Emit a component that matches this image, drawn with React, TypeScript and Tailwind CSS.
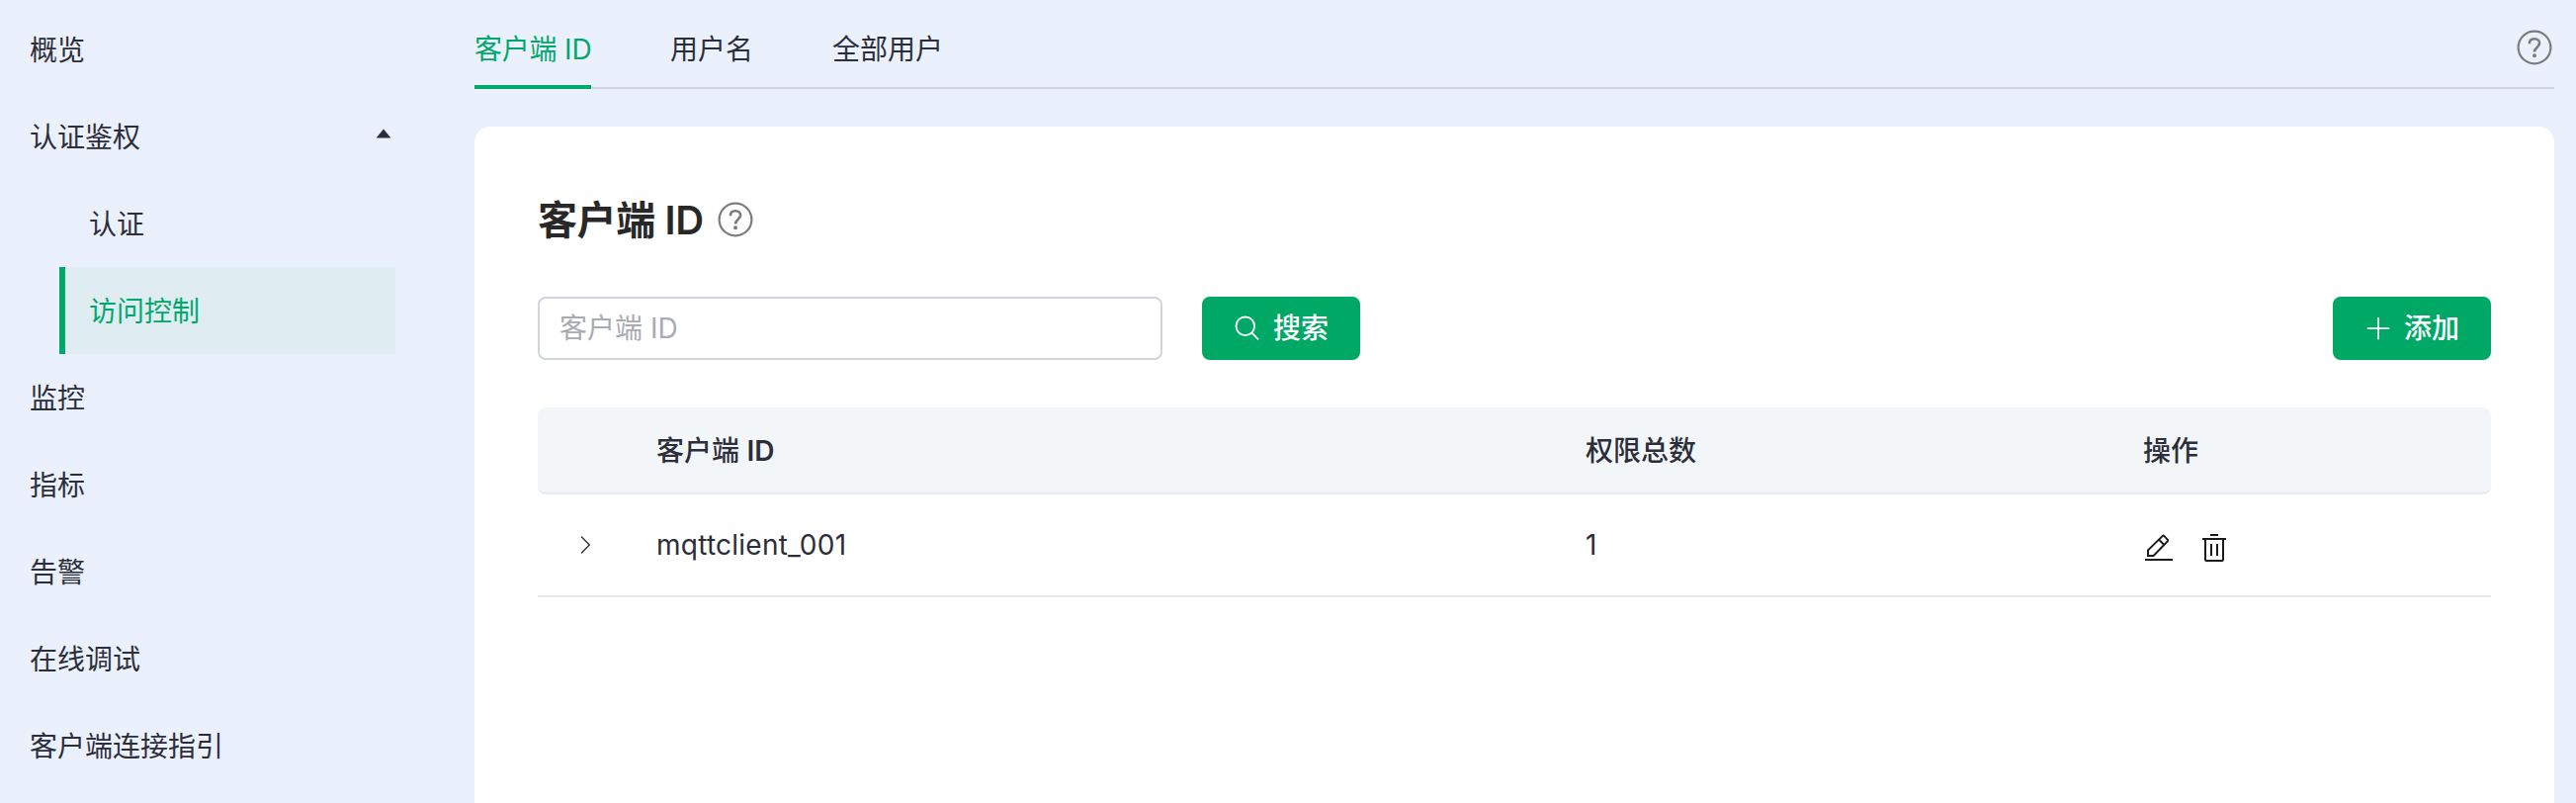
import React from "react";

const menu = [
  { label: "概览" },
  {
    label: "认证鉴权",
    children: [{ label: "认证" }, { label: "访问控制", active: true }],
  },
  { label: "监控" },
  { label: "指标" },
  { label: "告警" },
  { label: "在线调试" },
  { label: "客户端连接指引" },
];

const tabs = ["客户端 ID", "用户名", "全部用户"];

const rows = [{ clientId: "mqttclient_001", total: 1 }];

function HelpIcon({ className = "" }: { className?: string }) {
  return (
    <svg viewBox="0 0 36 36" className={`size-9 text-[#7b7c7d] ${className}`} fill="none" stroke="currentColor">
      <circle cx="18" cy="18" r="16.4" strokeWidth="2.2" />
      <path d="M12.9 14.2C12.9 11 15 9.2 18 9.2s5.1 1.8 5.1 4.6c0 3.9-5.1 4-5.1 8.7" strokeWidth="2.6" />
      <circle cx="18" cy="26.2" r="2" fill="currentColor" stroke="none" />
    </svg>
  );
}

function SearchIcon() {
  return (
    <svg viewBox="0 0 28 28" className="size-7" fill="none" stroke="currentColor" strokeWidth="1.8" strokeLinecap="round">
      <circle cx="11.8" cy="11.8" r="9.3" />
      <path d="m18.4 18.6 6.2 6.2" />
    </svg>
  );
}

function PlusIcon() {
  return (
    <svg viewBox="0 0 1024 1024" className="size-7" fill="currentColor">
      <path d="M480 480V128a32 32 0 0 1 64 0v352h352a32 32 0 1 1 0 64H544v352a32 32 0 1 1-64 0V544H128a32 32 0 0 1 0-64z" />
    </svg>
  );
}

function ChevronIcon() {
  return (
    <svg viewBox="0 0 1024 1024" className="size-6" fill="currentColor">
      <path d="M340.864 149.312a30.592 30.592 0 0 0 0 42.752L652.736 512 340.864 831.872a30.592 30.592 0 0 0 0 42.752 29.12 29.12 0 0 0 41.728 0L714.24 534.336a32 32 0 0 0 0-44.672L382.592 149.376a29.12 29.12 0 0 0-41.728 0z" />
    </svg>
  );
}

function EditIcon() {
  return (
    <svg viewBox="0 0 32 32" className="size-8" fill="none" stroke="#1a1a1a" strokeWidth="2">
      <path d="M2 28h28" />
      <path d="M5 24v-5.6L19.6 4.1a1.3 1.3 0 0 1 1.8 0l3.4 3.5a1.3 1.3 0 0 1 0 1.8L10.6 24H5z" />
      <path d="m16 7.6 5.4 5.4" />
    </svg>
  );
}

function TrashIcon() {
  return (
    <svg viewBox="0 0 32 32" className="size-8" fill="none" stroke="#1a1a1a" strokeWidth="2">
      <path d="M12 3h8M4 7h24M13 12v12M19 12v12" />
      <path d="M7 7v21a1 1 0 0 0 1 1h16a1 1 0 0 0 1-1V7" />
    </svg>
  );
}

function Sidebar() {
  return (
    <nav className="w-[480px] shrink-0 pt-1.5">
      {menu.map((item) => (
        <div key={item.label}>
          <div className="flex h-22 w-[400px] items-center justify-between pr-[4px] pl-[30px]">
            <span className="pt-px">{item.label}</span>
            {item.children && (
              <svg viewBox="0 0 16 10" className="mb-[7px] h-2.5 w-4" fill="currentColor">
                <path d="M8 .6 15.4 9.4H.6z" />
              </svg>
            )}
          </div>
          {item.children?.map((child) => (
            <div
              key={child.label}
              className={
                child.active
                  ? "ml-[60px] flex h-22 w-[340px] items-center border-l-6 border-[#00a86b] bg-[#dfedf2] pt-px pl-6 text-[#00a86b]"
                  : "ml-[60px] flex h-22 w-[340px] items-center pt-px pl-[30px]"
              }
            >
              {child.label}
            </div>
          ))}
        </div>
      ))}
    </nav>
  );
}

function ActionButton({ icon, label }: { icon: React.ReactNode; label: string }) {
  return (
    <button className="flex h-16 w-40 items-center justify-center gap-3 rounded-lg bg-[#00a866] font-medium text-white">
      {icon}
      <span>{label}</span>
    </button>
  );
}

export default function App() {
  return (
    <div className="flex h-[812px] w-[2606px] overflow-hidden bg-[#ebf1fc] font-['Inter','Noto_Sans_CJK_SC',sans-serif] text-[28px] leading-10 text-[#2c2e3a]">
      <Sidebar />
      <main className="flex w-[2104px] flex-col">
        <header className="flex h-[90px] items-stretch border-b-2 border-[#d0d4e0]">
          <div className="-mb-0.5 flex gap-20">
            {tabs.map((tab, i) => (
              <div
                key={tab}
                className={
                  i === 0
                    ? "w-[118px] border-b-4 border-[#00a86b] pt-[30px] tracking-[-0.2px] whitespace-nowrap text-[#00a86b]"
                    : "pt-[30px] whitespace-nowrap"
                }
              >
                {tab}
              </div>
            ))}
          </div>
          <HelpIcon className="mt-[30px] mr-0.5 ml-auto" />
        </header>

        <section className="mt-[38px] flex flex-1 flex-col rounded-t-2xl bg-white px-16">
          <div className="mt-[66px] flex h-14 items-center">
            <h1 className="w-[168px] pt-0.5 text-[40px] font-semibold tracking-[-0.4px] whitespace-nowrap text-[#282828]">
              客户端 ID
            </h1>
            <HelpIcon className="ml-[14px]" />
          </div>

          <div className="mt-[50px] flex">
            <input
              placeholder="客户端 ID"
              className="h-16 w-[632px] rounded-lg border-2 border-[#d0d5de] px-5 placeholder:text-[#a8abb2]"
            />
            <div className="ml-10">
              <ActionButton icon={<SearchIcon />} label="搜索" />
            </div>
            <div className="ml-auto">
              <ActionButton icon={<PlusIcon />} label="添加" />
            </div>
          </div>

          <div className="mt-12">
            <div className="grid h-22 grid-cols-[120px_940px_564px_1fr] items-center rounded-lg border-b-2 border-[#e6eaf3] bg-[#f2f6f9] pt-px font-medium">
              <span />
              <span>
                客户端 <span className="font-semibold">ID</span>
              </span>
              <span>权限总数</span>
              <span>操作</span>
            </div>
            {rows.map((row) => (
              <div
                key={row.clientId}
                className="grid h-[104px] grid-cols-[120px_940px_564px_1fr] items-center border-b-2 border-[#e6eaf3]"
              >
                <div className="pl-9">
                  <ChevronIcon />
                </div>
                <span className="tracking-[0.25px]">{row.clientId}</span>
                <span>{row.total}</span>
                <div className="flex gap-6 pt-1.5">
                  <EditIcon />
                  <TrashIcon />
                </div>
              </div>
            ))}
          </div>
        </section>
      </main>
    </div>
  );
}
